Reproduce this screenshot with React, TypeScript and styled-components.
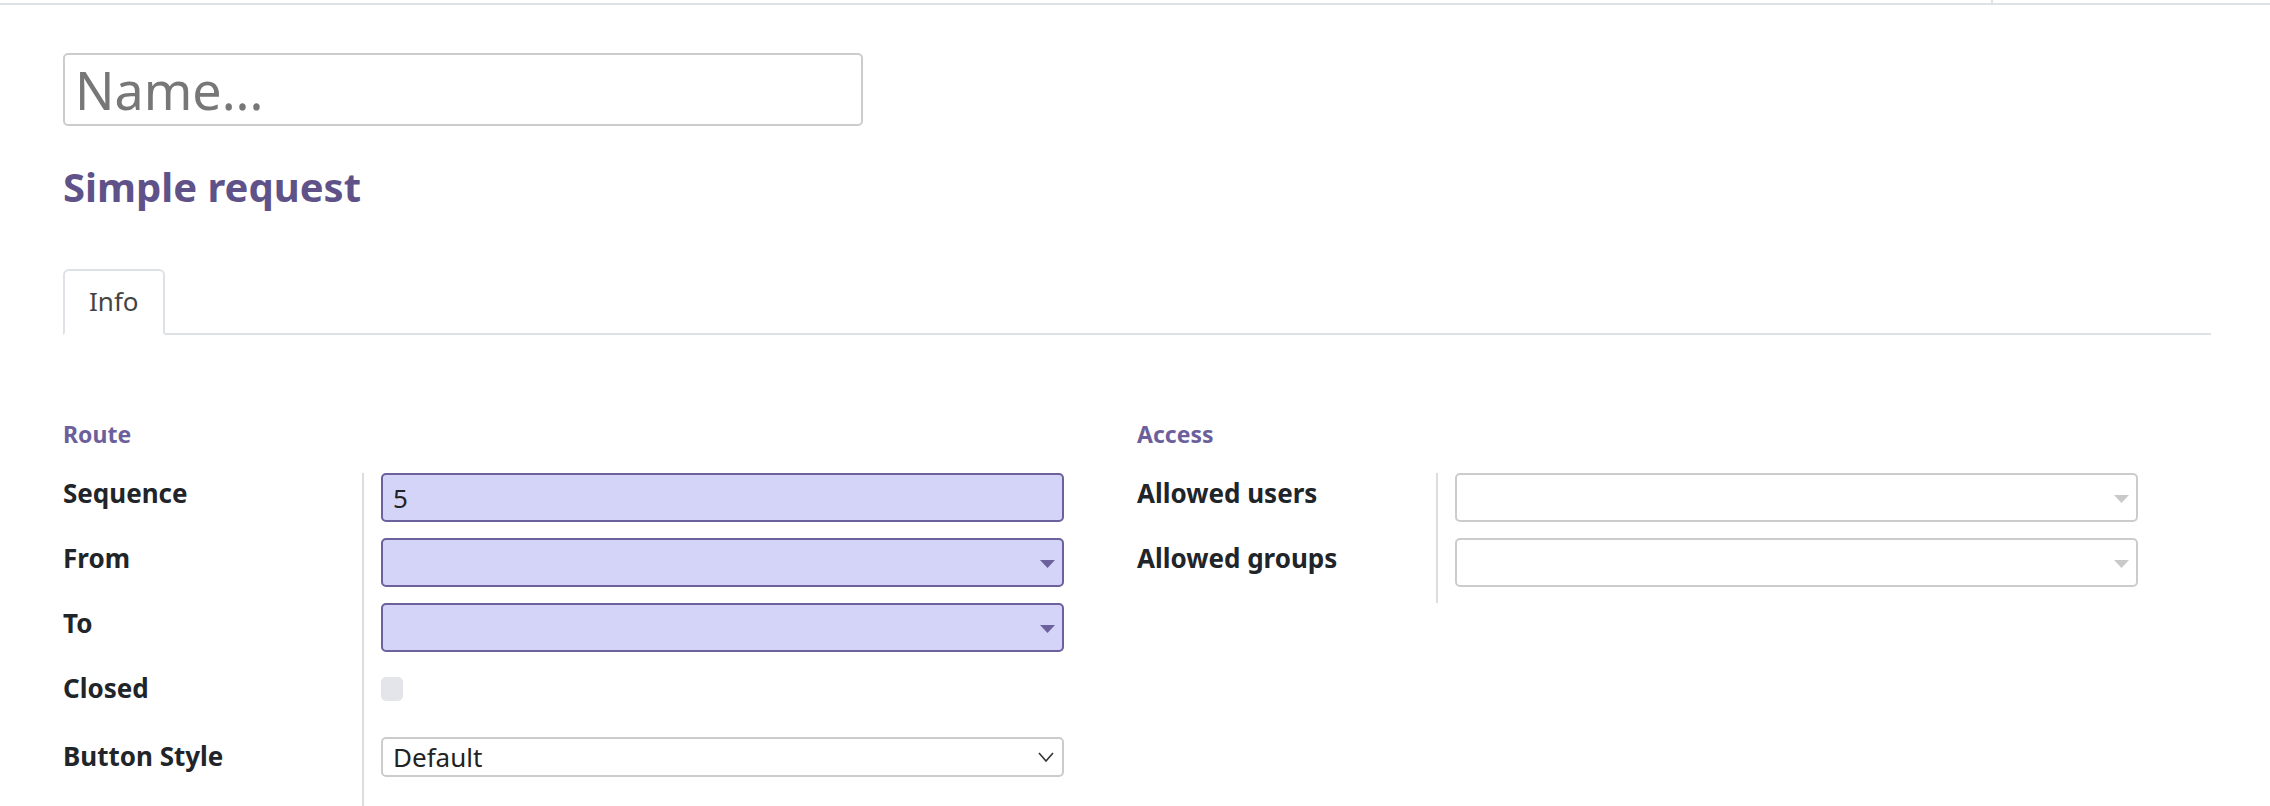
import React from "react";
import styled, { createGlobalStyle } from "styled-components";

const GlobalStyle = createGlobalStyle`
  html, body {
    margin: 0;
    padding: 0;
    background: #ffffff;
  }
  body {
    font-family: "Noto Sans", "Open Sans", sans-serif;
    color: #222;
  }
  * {
    box-sizing: border-box;
  }
`;

type FieldRow = {
  label: string;
  kind: "text" | "many2one" | "checkbox" | "select";
  value?: string;
  required?: boolean;
};

const routeRows: FieldRow[] = [
  { label: "Sequence", kind: "text", value: "5", required: true },
  { label: "From", kind: "many2one", required: true },
  { label: "To", kind: "many2one", required: true },
  { label: "Closed", kind: "checkbox" },
  { label: "Button Style", kind: "select", value: "Default" },
];

const accessRows: FieldRow[] = [
  { label: "Allowed users", kind: "many2one" },
  { label: "Allowed groups", kind: "many2one" },
];

function Caret({ required }: { required?: boolean }) {
  return (
    <CaretIcon width="15" height="8" viewBox="0 0 15 8">
      <polygon points="0,0 15,0 7.5,8" fill={required ? "#6c619c" : "#c9c9c9"} />
    </CaretIcon>
  );
}

function Field({ row }: { row: FieldRow }) {
  if (row.kind === "checkbox") return <Checkbox />;
  if (row.kind === "select")
    return (
      <SelectBox>
        <span>{row.value}</span>
        <svg width="16" height="10" viewBox="0 0 16 10">
          <polyline points="1,1 8,9 15,1" fill="none" stroke="#333" strokeWidth="1.6" />
        </svg>
      </SelectBox>
    );
  return (
    <InputBox $required={row.required}>
      {row.kind === "text" ? <span>{row.value}</span> : <span />}
      {row.kind === "many2one" && <Caret required={row.required} />}
    </InputBox>
  );
}

function Group({ title, rows, tail }: { title: string; rows: FieldRow[]; tail?: boolean }) {
  return (
    <GroupBox>
      <GroupTitle>{title}</GroupTitle>
      <GroupGrid>
        {rows.map((r, i) => (
          <React.Fragment key={r.label}>
            <Label $kind={r.kind}>{r.label}</Label>
            <Cell $kind={r.kind} $last={tail && i === rows.length - 1}>
              <Field row={r} />
            </Cell>
          </React.Fragment>
        ))}
      </GroupGrid>
    </GroupBox>
  );
}

export default function App() {
  return (
    <Page>
      <GlobalStyle />
      <TopStrip>
        <TopSegment />
      </TopStrip>
      <Sheet>
        <NameInput placeholder="Name..." />
        <Title>Simple request</Title>
        <Tabs>
          <Tab>Info</Tab>
        </Tabs>
        <Groups>
          <Group title="Route" rows={routeRows} tail />
          <Group title="Access" rows={accessRows} />
        </Groups>
      </Sheet>
    </Page>
  );
}

const Page = styled.div`
  width: 2270px;
  min-height: 806px;
  overflow: hidden;
`;

const TopStrip = styled.div`
  height: 5px;
  border-bottom: 2px solid #dee2e6;
  display: flex;
`;

const TopSegment = styled.div`
  width: 1993px;
  height: 3px;
  border-right: 2px solid #dee2e6;
`;

const Sheet = styled.div`
  padding: 0 59px 0 63px;
`;

const NameInput = styled.input`
  display: block;
  margin-top: 48px;
  width: 800px;
  height: 73px;
  border: 2px solid #cccccc;
  border-radius: 5px;
  padding: 0 10px;
  font-family: "Noto Sans", sans-serif;
  font-size: 52px;
  color: #222;
  outline: none;
  &::placeholder {
    color: #777777;
  }
`;

const Title = styled.h2`
  margin: 36px 0 0;
  font-size: 40px;
  line-height: 49px;
  font-weight: 700;
  color: #5f5288;
`;

const Tabs = styled.div`
  margin-top: 58px;
  display: flex;
  border-bottom: 2px solid #dee2e6;
`;

const Tab = styled.div`
  margin-bottom: -2px;
  padding: 15px 24px 16px;
  border: 2px solid #dee2e6;
  border-bottom-color: #ffffff;
  border-radius: 6px 6px 0 0;
  background: #fff;
  font-size: 26px;
  line-height: 31px;
  color: #444;
`;

const Groups = styled.div`
  display: grid;
  grid-template-columns: 1fr 1fr;
  margin-top: 85px;
`;

const GroupBox = styled.div`
  padding-right: 73px;
`;

const GroupTitle = styled.div`
  font-size: 23px;
  line-height: 28px;
  font-weight: 700;
  color: #6c5f9b;
  margin-bottom: 25px;
`;

const GroupGrid = styled.div`
  display: grid;
  grid-template-columns: 299px 1fr;
`;

const Label = styled.div<{ $kind: FieldRow["kind"] }>`
  font-size: 26px;
  line-height: 31px;
  font-weight: 700;
  color: #212529;
  padding-top: ${(p) => (p.$kind === "select" ? "8px" : "5px")};
`;

const Cell = styled.div<{ $kind: FieldRow["kind"]; $last?: boolean }>`
  border-left: 2px solid #dddddd;
  padding-left: 17px;
  padding-bottom: ${(p) => (p.$last ? "40px" : "16px")};
  min-height: ${(p) => (p.$kind === "checkbox" ? "65px" : "auto")};
  padding-top: ${(p) => (p.$kind === "checkbox" ? "9px" : p.$kind === "select" ? "4px" : "0")};
`;

const InputBox = styled.div<{ $required?: boolean }>`
  height: 49px;
  display: flex;
  align-items: center;
  justify-content: space-between;
  padding: 0 7px 0 10px;
  border: 2px solid ${(p) => (p.$required ? "#6c619c" : "#cccccc")};
  border-radius: 5px;
  background: ${(p) => (p.$required ? "#d4d3f8" : "#ffffff")};
  font-size: 26px;
  color: #222;
`;

const CaretIcon = styled.svg`
  flex: none;
  margin-top: 2px;
`;

const Checkbox = styled.div`
  width: 22px;
  height: 24px;
  border-radius: 5px;
  background: #e4e5ea;
`;

const SelectBox = styled.div`
  height: 40px;
  display: flex;
  align-items: center;
  justify-content: space-between;
  padding: 0 8px 0 10px;
  border: 2px solid #cccccc;
  border-radius: 5px;
  background: #fff;
  font-size: 26px;
  color: #222;
`;
